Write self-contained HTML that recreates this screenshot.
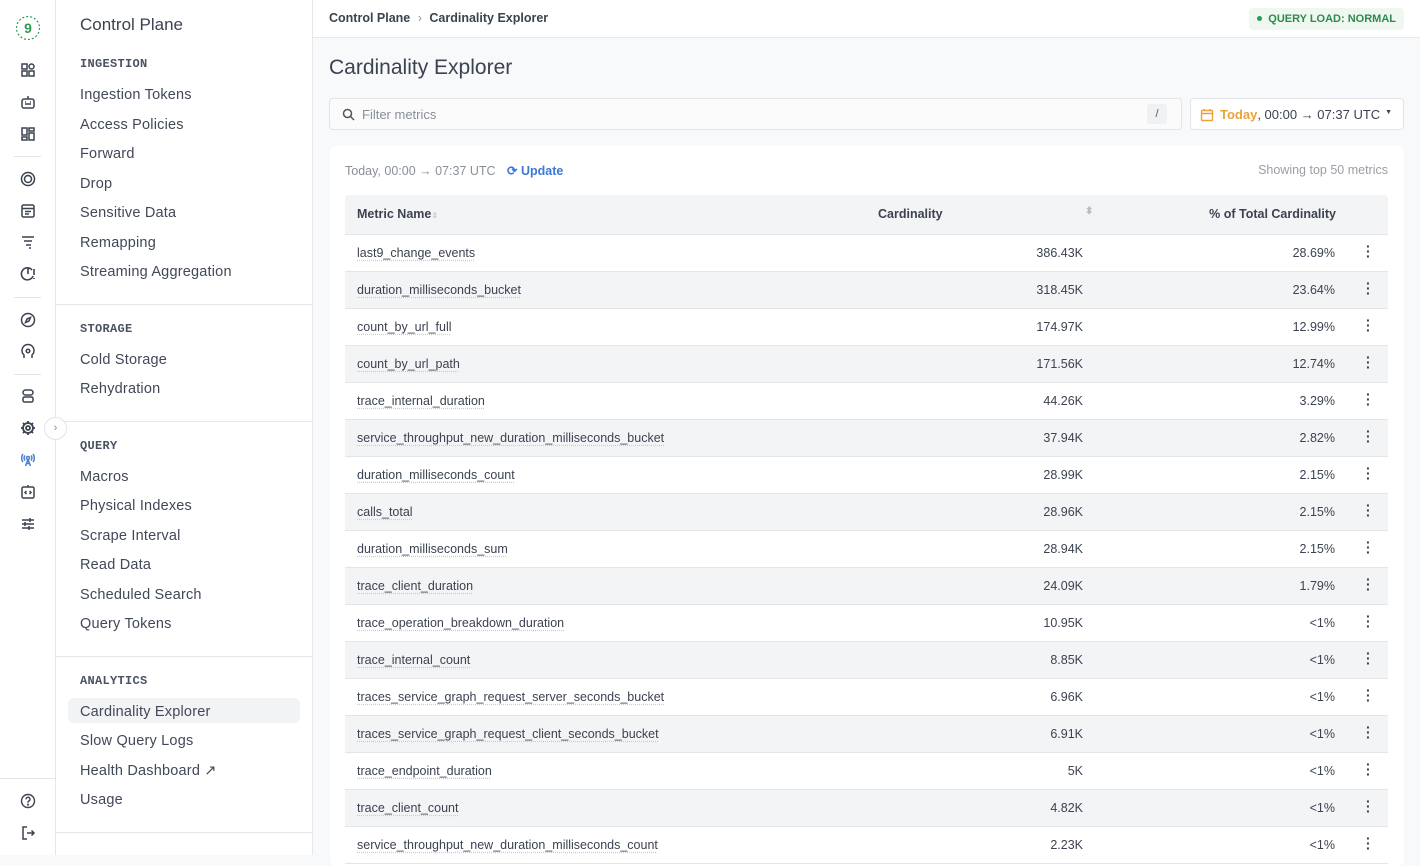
<!DOCTYPE html>
<html><head><meta charset="utf-8"><style>
*{box-sizing:border-box;margin:0;padding:0}
body{width:1420px;height:855px;overflow:hidden;font-family:"Liberation Sans",sans-serif;color:#3b4250;background:#f8f9fa;position:relative}
.rail{position:absolute;left:0;top:0;width:56px;height:855px;background:#fff;border-right:1px solid #e5e7eb}
.ic{position:absolute;left:19px;width:18px;height:18px}
.sep{position:absolute;left:14px;width:27px;border-top:1px solid #e2e4e8}
.side{position:absolute;left:56px;top:0;width:257px;height:855px;background:#fff;border-right:1px solid #e5e7eb}
.side .t{position:absolute;left:24px;top:15px;font-size:17px;color:#3b4250}
.sh{position:absolute;left:24px;font-family:"Liberation Mono",monospace;font-weight:bold;font-size:12px;color:#4a5160;letter-spacing:.3px}
.si{position:absolute;left:24px;font-size:14.5px;color:#414857;letter-spacing:.2px}
.hr{position:absolute;left:0;width:256px;border-top:1px solid #e5e7eb}
.top{position:absolute;left:313px;top:0;right:0;height:38px;background:#fff;border-bottom:1px solid #e5e7eb}
.card{position:absolute;left:330px;top:146px;width:1074px;height:720px;background:#fff;border-radius:6px}
.row{position:absolute;left:15px;width:1043px;height:37px;border-bottom:1px solid #e3e5e9;font-size:12.5px;color:#3b4250}
.row.g{background:#f3f4f6}
.row span{position:absolute;top:11px}
.n{left:12px;text-decoration:underline dotted #c8ccd2;text-underline-offset:3px}
.c{right:305px}
.p{right:53px}
.d{right:18px;top:9px!important;font-weight:bold;font-size:14px;line-height:5px;width:4px;text-align:center}
</style></head><body>
<div class="rail">
<svg style="position:absolute;left:15px;top:15px" width="26" height="26" viewBox="0 0 26 26"><circle cx="13" cy="13" r="11.5" fill="none" stroke="#2f9a55" stroke-width="1.2" stroke-dasharray="2 2"/><text x="13" y="18" text-anchor="middle" font-family="Liberation Sans" font-weight="bold" font-size="14" fill="#2f9a55">9</text></svg>
<svg class="ic" style="top:61px" viewBox="0 0 18 18" fill="none" stroke="#3b4250" stroke-width="1.5"><rect x="3" y="3" width="5" height="5"/><rect x="3" y="10" width="5" height="5"/><rect x="10" y="10" width="5" height="5"/><circle cx="12.5" cy="5.5" r="2.5"/></svg>
<svg class="ic" style="top:93px" viewBox="0 0 18 18" fill="none" stroke="#3b4250" stroke-width="1.5"><rect x="3" y="6" width="12" height="9" rx="2"/><path d="M9 3v3M6 11h6M6 9h1M11 9h1"/></svg>
<svg class="ic" style="top:125px" viewBox="0 0 18 18" fill="none" stroke="#3b4250" stroke-width="1.5"><rect x="3" y="3" width="5" height="7"/><rect x="3" y="12" width="5" height="3"/><rect x="10" y="3" width="5" height="3"/><rect x="10" y="8" width="5" height="7"/></svg>
<div class="sep" style="top:156px"></div>
<svg class="ic" style="top:170px" viewBox="0 0 18 18" fill="none" stroke="#3b4250" stroke-width="1.5"><circle cx="9" cy="9" r="6.5"/><circle cx="9" cy="9" r="3.5"/></svg>
<svg class="ic" style="top:202px" viewBox="0 0 18 18" fill="none" stroke="#3b4250" stroke-width="1.5"><rect x="3" y="3" width="12" height="12" rx="1.5"/><path d="M3 6.5h12M6 9.5h6M6 12h4"/></svg>
<svg class="ic" style="top:233px" viewBox="0 0 18 18" fill="none" stroke="#3b4250" stroke-width="1.5"><path d="M3 4h12M5 8h8M7 12h5M10 15h2"/></svg>
<svg class="ic" style="top:265px" viewBox="0 0 18 18" fill="none" stroke="#3b4250" stroke-width="1.6"><path d="M13 5a6 6 0 1 0 1 6"/><path d="M9 9V3M15 4v6M15 13v1"/></svg>
<div class="sep" style="top:297px"></div>
<svg class="ic" style="top:311px" viewBox="0 0 18 18" fill="none" stroke="#3b4250" stroke-width="1.5"><circle cx="9" cy="9" r="6.5"/><path d="M11.5 6.5l-1.5 3.5-3.5 1.5 1.5-3.5z"/></svg>
<svg class="ic" style="top:343px" viewBox="0 0 18 18" fill="none" stroke="#3b4250" stroke-width="1.5"><path d="M5 15v-3a6 6 0 1 1 8 0v3"/><circle cx="9" cy="8" r="1.8"/></svg>
<div class="sep" style="top:374px"></div>
<svg class="ic" style="top:387px" viewBox="0 0 18 18" fill="none" stroke="#3b4250" stroke-width="1.5"><rect x="4" y="3" width="10" height="5" rx="2.5"/><rect x="4" y="10" width="10" height="5" rx="1.5"/></svg>
<svg class="ic" style="top:419px" viewBox="0 0 18 18" fill="none" stroke="#3b4250" stroke-width="1.8"><circle cx="9" cy="9" r="5"/><circle cx="9" cy="9" r="2"/><path d="M9 2v2M9 14v2M2 9h2M14 9h2M4 4l1.5 1.5M12.5 12.5L14 14M4 14l1.5-1.5M12.5 5.5L14 4"/></svg>
<svg class="ic" style="top:451px" viewBox="0 0 18 18" fill="none" stroke="#4a7fd4" stroke-width="1.5"><circle cx="9" cy="7" r="1.5"/><path d="M6 4.5a4 4 0 0 0 0 5M12 4.5a4 4 0 0 1 0 5M4 3a6.5 6.5 0 0 0 0 8M14 3a6.5 6.5 0 0 1 0 8M9 8.5L6.5 15M9 8.5l2.5 6.5M7.3 12.5h3.4"/></svg>
<svg class="ic" style="top:483px" viewBox="0 0 18 18" fill="none" stroke="#3b4250" stroke-width="1.5"><rect x="3" y="4" width="12" height="11" rx="1.5"/><path d="M9 2v2M7.5 8l-1.5 1.5 1.5 1.5M10.5 8l1.5 1.5-1.5 1.5"/></svg>
<svg class="ic" style="top:515px" viewBox="0 0 18 18" fill="none" stroke="#3b4250" stroke-width="1.5"><path d="M3 5h12M3 9h12M3 13h12M11 3v4M6 7v4M10 11v4"/></svg>
<div class="sep" style="top:778px;left:0;width:56px"></div>
<svg class="ic" style="top:792px" viewBox="0 0 18 18" fill="none" stroke="#3b4250" stroke-width="1.4"><circle cx="9" cy="9" r="6.5"/><path d="M7 7.3a2 2 0 1 1 2.5 1.9c-.4.2-.5.5-.5 1v.5"/><circle cx="9" cy="12.6" r=".4"/></svg>
<svg class="ic" style="top:824px" viewBox="0 0 18 18" fill="none" stroke="#3b4250" stroke-width="1.5"><path d="M8 3H4v12h4M8 9h7M12.5 6.5L15 9l-2.5 2.5"/></svg>
</div>
<div class="side">
<div class="t">Control Plane</div>
<div class="sh" style="top:57px">INGESTION</div>
<div class="si" style="top:87px">Ingestion Tokens</div>
<div class="si" style="top:117px">Access Policies</div>
<div class="si" style="top:146px">Forward</div>
<div class="si" style="top:176px">Drop</div>
<div class="si" style="top:205px">Sensitive Data</div>
<div class="si" style="top:235px">Remapping</div>
<div class="si" style="top:264px">Streaming Aggregation</div>
<div class="hr" style="top:304px"></div>
<div class="sh" style="top:322px">STORAGE</div>
<div class="si" style="top:352px">Cold Storage</div>
<div class="si" style="top:381px">Rehydration</div>
<div class="hr" style="top:421px"></div>
<div class="sh" style="top:439px">QUERY</div>
<div class="si" style="top:469px">Macros</div>
<div class="si" style="top:498px">Physical Indexes</div>
<div class="si" style="top:528px">Scrape Interval</div>
<div class="si" style="top:557px">Read Data</div>
<div class="si" style="top:587px">Scheduled Search</div>
<div class="si" style="top:616px">Query Tokens</div>
<div class="hr" style="top:656px"></div>
<div class="sh" style="top:674px">ANALYTICS</div>
<div style="position:absolute;left:12px;top:698px;width:232px;height:25px;background:#f2f3f5;border-radius:6px"></div>
<div class="si" style="top:704px">Cardinality Explorer</div>
<div class="si" style="top:733px">Slow Query Logs</div>
<div class="si" style="top:763px">Health Dashboard ↗</div>
<div class="si" style="top:792px">Usage</div>
<div class="hr" style="top:832px"></div>
</div>
<div style="position:absolute;left:44px;top:417px;width:23px;height:23px;border-radius:50%;background:#fff;border:1px solid #e2e4e8;font-size:11px;color:#888;text-align:center;line-height:20px">›</div>
<div class="top">
<div style="position:absolute;left:16px;top:11px;font-size:12.5px;font-weight:bold;color:#3b4250">Control Plane <span style="color:#999;font-weight:normal;margin:0 4px">›</span> Cardinality Explorer</div>
<div style="position:absolute;right:16px;top:8px;height:22px;padding:0 8px;background:#eef7f0;border-radius:4px;font-size:11px;font-weight:bold;color:#2f8a4f;line-height:22px"><span style="display:inline-block;width:5px;height:5px;border-radius:50%;background:#2f9a55;margin-right:6px;vertical-align:middle;position:relative;top:-1px"></span>QUERY LOAD: NORMAL</div>
</div>
<div style="position:absolute;left:329px;top:56px;font-size:21px;color:#3b4250">Cardinality Explorer</div>
<div style="position:absolute;left:329px;top:98px;width:853px;height:32px;background:#fbfbfc;border:1px solid #e2e4e8;border-radius:4px">
<svg style="position:absolute;left:12px;top:9px" width="14" height="14" viewBox="0 0 14 14" fill="none" stroke="#555" stroke-width="1.5"><circle cx="5.5" cy="5.5" r="4"/><path d="M8.5 8.5L12 12"/></svg>
<span style="position:absolute;left:32px;top:8px;font-size:13px;color:#8a8f98">Filter metrics</span>
<span style="position:absolute;right:14px;top:5px;width:20px;height:20px;background:#f0f1f3;border-radius:3px;font-size:11px;text-align:center;line-height:20px;color:#555">/</span>
</div>
<div style="position:absolute;left:1190px;top:98px;width:214px;height:32px;background:#fff;border:1px solid #e2e4e8;border-radius:4px;font-size:13px;color:#3b4250">
<svg style="position:absolute;left:9px;top:9px" width="14" height="14" viewBox="0 0 14 14" fill="none" stroke="#e8a33a" stroke-width="1.4"><rect x="1.5" y="2.5" width="11" height="10" rx="1"/><path d="M1.5 5.5h11M4 1v2M10 1v2"/></svg>
<span style="position:absolute;left:29px;top:8px"><span style="color:#e8a33a;font-weight:bold">Today</span>, 00:00 → 07:37 UTC</span>
<span style="position:absolute;right:11px;top:10px;font-size:7px">▼</span>
</div>
<div class="card">
<div style="position:absolute;left:15px;top:17px;font-size:12.5px;color:#8a8f98">Today, 00:00 → 07:37 UTC <span style="color:#3b78d8;font-weight:bold;margin-left:8px">⟳ Update</span></div>
<div style="position:absolute;right:16px;top:17px;font-size:12.5px;color:#9a9ea6">Showing top 50 metrics</div>
<div style="position:absolute;left:15px;top:49px;width:1043px;height:40px;background:#f3f4f6;border-bottom:1px solid #e3e5e9;border-radius:4px 4px 0 0;font-size:12.5px;font-weight:bold;color:#3b4250">
<span style="position:absolute;left:12px;top:12px">Metric Name<span style="color:#ccc;font-size:8px">⇕</span></span>
<span style="position:absolute;left:533px;top:12px">Cardinality</span>
<span style="position:absolute;left:740px;top:11px;color:#bbb;font-size:10px">⬍</span>
<span style="position:absolute;right:52px;top:12px">% of Total Cardinality</span>
</div>
<div class="row" style="top:89px"><span class="n">last9_change_events</span><span class="c">386.43K</span><span class="p">28.69%</span><span class="d">·<br>·<br>·</span></div>
<div class="row g" style="top:126px"><span class="n">duration_milliseconds_bucket</span><span class="c">318.45K</span><span class="p">23.64%</span><span class="d">·<br>·<br>·</span></div>
<div class="row" style="top:163px"><span class="n">count_by_url_full</span><span class="c">174.97K</span><span class="p">12.99%</span><span class="d">·<br>·<br>·</span></div>
<div class="row g" style="top:200px"><span class="n">count_by_url_path</span><span class="c">171.56K</span><span class="p">12.74%</span><span class="d">·<br>·<br>·</span></div>
<div class="row" style="top:237px"><span class="n">trace_internal_duration</span><span class="c">44.26K</span><span class="p">3.29%</span><span class="d">·<br>·<br>·</span></div>
<div class="row g" style="top:274px"><span class="n">service_throughput_new_duration_milliseconds_bucket</span><span class="c">37.94K</span><span class="p">2.82%</span><span class="d">·<br>·<br>·</span></div>
<div class="row" style="top:311px"><span class="n">duration_milliseconds_count</span><span class="c">28.99K</span><span class="p">2.15%</span><span class="d">·<br>·<br>·</span></div>
<div class="row g" style="top:348px"><span class="n">calls_total</span><span class="c">28.96K</span><span class="p">2.15%</span><span class="d">·<br>·<br>·</span></div>
<div class="row" style="top:385px"><span class="n">duration_milliseconds_sum</span><span class="c">28.94K</span><span class="p">2.15%</span><span class="d">·<br>·<br>·</span></div>
<div class="row g" style="top:422px"><span class="n">trace_client_duration</span><span class="c">24.09K</span><span class="p">1.79%</span><span class="d">·<br>·<br>·</span></div>
<div class="row" style="top:459px"><span class="n">trace_operation_breakdown_duration</span><span class="c">10.95K</span><span class="p">&lt;1%</span><span class="d">·<br>·<br>·</span></div>
<div class="row g" style="top:496px"><span class="n">trace_internal_count</span><span class="c">8.85K</span><span class="p">&lt;1%</span><span class="d">·<br>·<br>·</span></div>
<div class="row" style="top:533px"><span class="n">traces_service_graph_request_server_seconds_bucket</span><span class="c">6.96K</span><span class="p">&lt;1%</span><span class="d">·<br>·<br>·</span></div>
<div class="row g" style="top:570px"><span class="n">traces_service_graph_request_client_seconds_bucket</span><span class="c">6.91K</span><span class="p">&lt;1%</span><span class="d">·<br>·<br>·</span></div>
<div class="row" style="top:607px"><span class="n">trace_endpoint_duration</span><span class="c">5K</span><span class="p">&lt;1%</span><span class="d">·<br>·<br>·</span></div>
<div class="row g" style="top:644px"><span class="n">trace_client_count</span><span class="c">4.82K</span><span class="p">&lt;1%</span><span class="d">·<br>·<br>·</span></div>
<div class="row" style="top:681px"><span class="n">service_throughput_new_duration_milliseconds_count</span><span class="c">2.23K</span><span class="p">&lt;1%</span><span class="d">·<br>·<br>·</span></div>
</div>
</body></html>
